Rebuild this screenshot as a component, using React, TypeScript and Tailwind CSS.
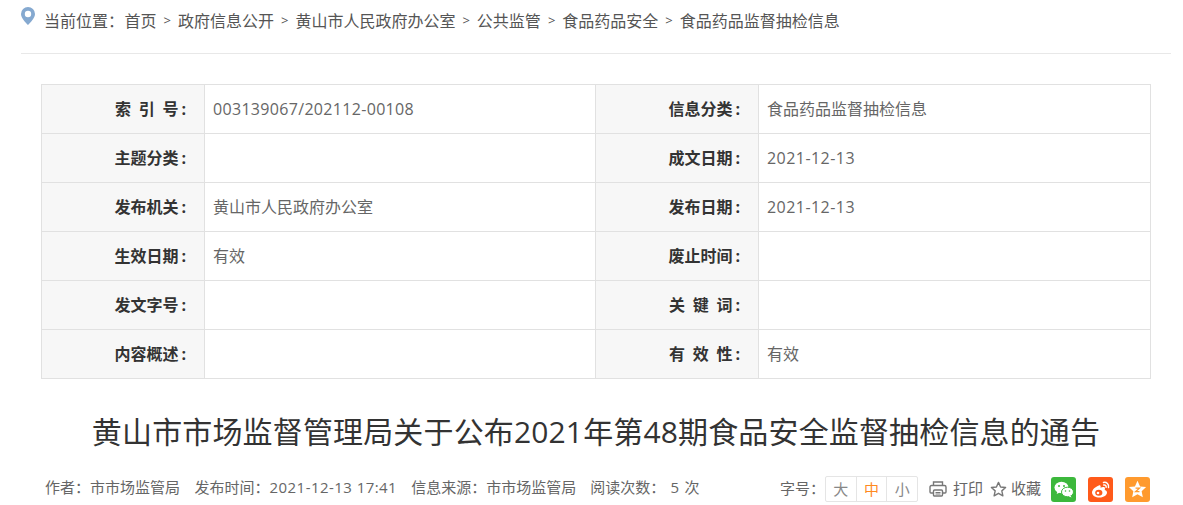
const FONT = "font-['Open_Sans','Noto_Sans_CJK_SC',sans-serif]";

const rows: [string, string, string, string][] = [
  ["索 引 号", "003139067/202112-00108", "信息分类", "食品药品监督抽检信息"],
  ["主题分类", "", "成文日期", "2021-12-13"],
  ["发布机关", "黄山市人民政府办公室", "发布日期", "2021-12-13"],
  ["生效日期", "有效", "废止时间", ""],
  ["发文字号", "", "关 键 词", ""],
  ["内容概述", "", "有 效 性", "有效"],
];

const crumbs = ["首页", "政府信息公开", "黄山市人民政府办公室", "公共监管", "食品药品安全", "食品药品监督抽检信息"];

function Label({ text }: { text: string }) {
  return (
    <td className="w-[163px] h-[49px] border border-[#e1e1e1] bg-[#f7f7f7] p-0 pr-[18px] text-right text-[16px] font-bold text-[#333] [word-spacing:3.5px]">
      {text}
      <span className="ml-[3px]">:</span>
    </td>
  );
}

function Value({ text, w }: { text: string; w: string }) {
  const date = /^\d{4}-/.test(text);
  const code = /^\d{9}/.test(text);
  return (
    <td className={`${w} border border-[#e1e1e1] p-0 pl-2 text-[16px] text-[#666] ${date ? "tracking-[0.45px]" : ""} ${code ? "tracking-[0.32px]" : ""}`}>{text}</td>
  );
}

export default function App() {
  return (
    <div className={`${FONT} w-[1183px] h-[505px] overflow-hidden bg-white pl-[21px] pr-3`}>
      <div className="flex h-[54px] border-b border-[#e8e8e8] pt-[7px]">
        <svg width="14" height="18" viewBox="0 0 14 18" className="shrink-0">
          <path
            fillRule="evenodd"
            fill="#85a9d0"
            d="M7 0a7 7 0 0 1 7 7c0 4-4.500 8.500-7 11C4.500 15.500 0 11 0 7a7 7 0 0 1 7-7zm0 3.800a3.200 3.200 0 1 0 0 6.400 3.200 3.200 0 0 0 0-6.400z"
          />
        </svg>
        <div className="ml-[9px] mt-[3px] flex h-[22px] items-center text-[16px] text-[#555]">
          <span className="w-[80.5px]">当前位置：</span>
          {crumbs.map((c, i) => (
            <span key={c} className="flex items-center">
              {i > 0 && <span className="mx-[7px] text-[13px]">&gt;</span>}
              <span>{c}</span>
            </span>
          ))}
        </div>
      </div>

      <div className="mx-5 mt-[30px]">
        <table className="w-[1110px] table-fixed border-collapse">
          <tbody>
            {rows.map((r) => (
              <tr key={r[0]} className="h-[49px]">
                <Label text={r[0]} />
                <Value text={r[1]} w="w-[391px]" />
                <Label text={r[2]} />
                <Value text={r[3]} w="w-[392px]" />
              </tr>
            ))}
          </tbody>
        </table>

        <h1 className="mt-[31px] h-[44px] text-center text-[30px] font-normal leading-[44px] tracking-[0.15px] text-[#333]">
          黄山市市场监督管理局关于公布2021年第48期食品安全监督抽检信息的通告
        </h1>
      </div>

      <div className="mt-[19px] flex h-[32px] items-center justify-between pl-6 pr-[21px] text-[15px] text-[#666]">
        <div className="flex gap-[14px] pb-[3px]">
          <span>作者：市市场监管局</span>
          <span className="ml-[0.5px]">发布时间：<span className="tracking-[0.45px]">2021-12-13 17:41</span></span>
          <span>信息来源：市市场监管局</span>
          <span className="[word-spacing:1.5px]">阅读次数： 5 次</span>
        </div>
        <div className="flex items-center">
          <span className="pb-[1px]">字号：</span>
          <div className="flex h-[26px] w-[93px] rounded-[2px] border border-[#e5e5e5]">
            <span className="flex-1 border-r border-[#e5e5e5] text-center leading-[24px] text-[#888]">大</span>
            <span className="flex-1 border-r border-[#e5e5e5] text-center leading-[24px] text-[#ff8a1f]">中</span>
            <span className="flex-1 text-center leading-[24px] text-[#888]">小</span>
          </div>
          <svg width="18" height="16" viewBox="0 0 18 16" fill="none" stroke="#777" strokeWidth="1.400" className="ml-[11px]">
            <path d="M4.500 4.500V1h9v3.500M4 12H2a1 1 0 0 1-1-1V6a1.500 1.500 0 0 1 1.500-1.500h13A1.500 1.500 0 0 1 17 6v5a1 1 0 0 1-1 1h-2" />
            <rect x="4.500" y="9" width="9" height="6" rx="1" />
            <path d="M6.500 11.500h5M6.500 13h5" strokeWidth="1" />
          </svg>
          <span className="ml-[6px] pb-[1px]">打印</span>
          <svg width="17" height="16" viewBox="0 0 24 23" fill="none" stroke="#777" strokeWidth="2" className="ml-[7px]">
            <path d="M12 2l3 6.600 7.200.8-5.400 4.800 1.500 7.100L12 17.700l-6.300 3.600 1.500-7.100L1.800 9.400 9 8.600z" strokeLinejoin="round" />
          </svg>
          <span className="ml-[4px] pb-[1px]">收藏</span>
          <span className="ml-[10px] flex h-[25px] w-[25px] items-center justify-center rounded-[3px] bg-[#3cb83c]">
            <svg width="20" height="17" viewBox="0 0 20 17" fill="#fff">
              <ellipse cx="7.500" cy="6.500" rx="7" ry="5.800" />
              <path d="M3.500 10l-.8 3 3-1.500z" />
              <ellipse cx="13.500" cy="11" rx="6" ry="4.800" stroke="#3cb83c" strokeWidth="1" />
              <path d="M16.500 14.500l1 2-3-1.300z" />
              <circle cx="5" cy="5" r="1" fill="#3cb83c" />
              <circle cx="10" cy="5" r="1" fill="#3cb83c" />
              <circle cx="11.500" cy="10" r=".8" fill="#3cb83c" />
              <circle cx="15.500" cy="10" r=".8" fill="#3cb83c" />
            </svg>
          </span>
          <span className="ml-[12px] flex h-[25px] w-[25px] items-center justify-center rounded-[3px] bg-[#ff5a1a]">
            <svg width="20" height="18" viewBox="0 0 20 18" fill="none">
              <path
                fill="#fff"
                d="M8 5.500C4.500 6.500 1 9.800 1 12.500 1 15.500 4.500 17.500 8.500 17.500c4.500 0 7.500-2.500 7.500-5 0-1.500-1.300-2.300-2.300-2.600.5-1.300.3-2.300-.5-2.800-1-.5-2.500 0-3.700.6.300-1 .2-2-.3-2.300-.3-.2-.9-.1-1.700.1z"
              />
              <ellipse cx="7.800" cy="12.800" rx="3.600" ry="3" fill="#ff5a1a" />
              <circle cx="7" cy="13" r="1.300" fill="#fff" />
              <path d="M12.500 2.500c3-.8 5.800 2 5 5M12.800 5c1.500-.4 2.700.9 2.300 2.300" stroke="#fff" strokeWidth="1.500" strokeLinecap="round" />
            </svg>
          </span>
          <span className="ml-[12px] flex h-[25px] w-[25px] items-center justify-center rounded-[3px] bg-[#ff9a2e]">
            <svg width="19" height="18" viewBox="0 0 24 23">
              <path fill="#fff" d="M12 1l3.300 7.200 7.700.9-5.700 5.300 1.500 7.600-6.800-3.800L5.200 22l1.500-7.600L1 9.100l7.700-.9z" />
              <path d="M9.500 10.500h5l-5 4.500h5" fill="none" stroke="#ff9a2e" strokeWidth="1.600" />
            </svg>
          </span>
        </div>
      </div>
    </div>
  );
}
